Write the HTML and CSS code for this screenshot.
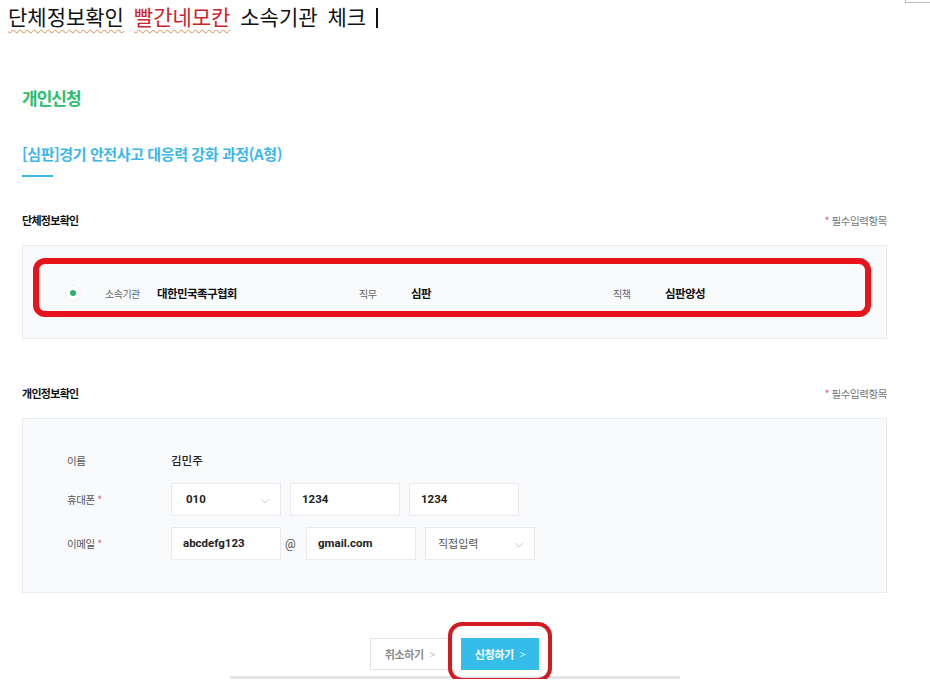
FILE: index.html
```html
<!DOCTYPE html>
<html lang="ko">
<head>
  <meta charset="utf-8">
  <title>개인신청</title>
  <link rel="stylesheet" href="styles.css">
</head>
<body>
  <div class="memo">
    <span class="spell">단체정보확인</span> <span class="spell red">빨간네모칸</span> 소속기관 체크 <span class="caret"></span>
  </div>
  <div class="corner"></div>

  <main class="page">
    <h1 class="page-title">개인신청</h1>
    <h2 class="course-title">[심판]경기 안전사고 대응력 강화 과정(A형)</h2>
    <div class="title-bar"></div>

    <div class="section-head">
      <h3>단체정보확인</h3>
      <span class="req"><em>*</em> 필수입력항목</span>
    </div>
    <div class="box group-box">
      <div class="group-row">
        <span class="radio"></span>
        <div class="field"><span class="lbl">소속기관</span><span class="val">대한민국족구협회</span></div>
        <div class="field"><span class="lbl">직무</span><span class="val">심판</span></div>
        <div class="field"><span class="lbl">직책</span><span class="val">심판양성</span></div>
      </div>
      <div class="mark mark-group"></div>
    </div>

    <div class="section-head second">
      <h3>개인정보확인</h3>
      <span class="req"><em>*</em> 필수입력항목</span>
    </div>
    <div class="box person-box">
      <div class="form-row name-row">
        <span class="form-lbl">이름</span>
        <span class="name-val">김민주</span>
      </div>
      <div class="form-row">
        <span class="form-lbl">휴대폰 <em>*</em></span>
        <div class="inputs">
          <div class="input select">010
            <svg class="chev" width="10" height="6" viewBox="0 0 10 6"><path d="M1 1l4 4 4-4" fill="none" stroke="#c9ccd1" stroke-width="1"/></svg>
          </div>
          <div class="input">1234</div>
          <div class="input">1234</div>
        </div>
      </div>
      <div class="form-row">
        <span class="form-lbl">이메일 <em>*</em></span>
        <div class="inputs">
          <div class="input">abcdefg123</div>
          <span class="at">@</span>
          <div class="input">gmail.com</div>
          <div class="input select plain">직접입력
            <svg class="chev" width="10" height="6" viewBox="0 0 10 6"><path d="M1 1l4 4 4-4" fill="none" stroke="#c9ccd1" stroke-width="1"/></svg>
          </div>
        </div>
      </div>
    </div>

    <div class="actions">
      <button class="btn btn-cancel">취소하기 <span class="arr">&gt;</span></button>
      <div class="submit-wrap">
        <button class="btn btn-submit">신청하기 <span class="arr">&gt;</span></button>
        <div class="mark mark-submit"></div>
      </div>
    </div>
    <div class="footer-line"></div>
  </main>
</body>
</html>
```

FILE: styles.css
```css
body {
  margin: 0;
  background: #fff;
  font-family: "Noto Sans CJK KR", "Noto Sans", sans-serif;
  color: #222;
  overflow: hidden;
}

.memo {
  height: 34px;
  padding-left: 8px;
  font-size: 21px;
  line-height: 32px;
  color: #111;
  word-spacing: 4px;
  white-space: nowrap;
}

.spell {
  text-decoration: underline wavy #e08a4a;
  text-decoration-thickness: 1px;
  text-underline-offset: 4px;
}

.red {
  color: #d0222a;
}

.caret {
  display: inline-block;
  width: 2px;
  height: 20px;
  background: #111;
  vertical-align: -3px;
}

.corner {
  position: absolute;
  top: 0;
  right: 0;
  width: 24px;
  height: 2px;
  border-left: 1px solid #bbb;
  border-bottom: 1px solid #bbb;
}

.page {
  width: 865px;
  margin-left: 22px;
}

.page-title {
  margin: 54px 0 0;
  font-size: 17px;
  line-height: 20px;
  font-weight: 700;
  letter-spacing: -1px;
  color: #2cbd6c;
}

.course-title {
  margin: 36px 0 0;
  font-size: 15px;
  line-height: 20px;
  font-weight: 700;
  letter-spacing: -0.4px;
  color: #3bb7e8;
}

.title-bar {
  width: 31px;
  height: 2px;
  margin-top: 11px;
  background: #3bb7e8;
}

.section-head {
  display: flex;
  justify-content: space-between;
  align-items: center;
  height: 16px;
  margin-top: 35px;
}

.section-head.second {
  margin-top: 46px;
}

.section-head h3 {
  margin: 0;
  font-size: 11px;
  font-weight: 700;
  letter-spacing: -0.7px;
  color: #111;
}

.req {
  font-size: 10.5px;
  color: #777;
  letter-spacing: -0.4px;
}

.req em,
.form-lbl em {
  font-style: normal;
  color: #e4587a;
}

.box {
  position: relative;
  margin-top: 17px;
  background: #f9fafc;
  border: 1px solid #e8ebef;
}

.group-box {
  padding: 37px 0 35px 43px;
}

.group-row {
  display: flex;
  align-items: center;
  height: 20px;
}

.radio {
  position: relative;
  width: 14px;
  height: 14px;
  border-radius: 50%;
  background: #fff;
  box-shadow: 0 0 0 1px #eef1f3;
  margin-right: 25px;
}

.radio::after {
  content: "";
  position: absolute;
  left: 4px;
  top: 4px;
  width: 6px;
  height: 6px;
  border-radius: 50%;
  background: #27b46a;
}

.field {
  display: flex;
  align-items: center;
  width: 254px;
}

.lbl {
  width: 52px;
  font-size: 10px;
  color: #666;
  letter-spacing: -0.5px;
}

.val {
  font-size: 11.5px;
  font-weight: 700;
  color: #111;
  letter-spacing: -0.6px;
}

.mark {
  position: absolute;
  box-sizing: border-box;
  border: 6px solid #e8141b;
  border-radius: 12px;
  pointer-events: none;
}

.mark-group {
  left: 10px;
  top: 12px;
  width: 838px;
  height: 59px;
}

.person-box {
  padding: 31px 0 32px 44px;
}

.form-row {
  display: flex;
  align-items: center;
  margin-top: 11px;
}

.name-row {
  height: 20px;
  margin-top: 0;
}

.name-row + .form-row {
  margin-top: 13px;
}

.form-lbl {
  width: 104px;
  font-size: 10.5px;
  color: #555;
  letter-spacing: -0.4px;
}

.name-val {
  font-size: 11.5px;
  font-weight: 500;
  color: #222;
}

.inputs {
  display: flex;
  align-items: center;
  gap: 9px;
}

.input {
  position: relative;
  box-sizing: border-box;
  width: 110px;
  height: 33px;
  padding-left: 11px;
  background: #fff;
  border: 1px solid #e8eaed;
  font-family: Roboto, "Noto Sans CJK KR", sans-serif;
  font-size: 11.5px;
  font-weight: 700;
  line-height: 31px;
  color: #222;
}

.input.select {
  padding-left: 14px;
}

.input.plain {
  padding-left: 12px;
  font-family: "Noto Sans CJK KR", sans-serif;
  font-size: 11px;
  font-weight: 400;
  color: #555;
}

.chev {
  position: absolute;
  right: 10px;
  top: 14px;
}

.at {
  width: 11px;
  margin: 0 1px 0 -5px;
  font-family: Roboto, sans-serif;
  font-size: 12px;
  color: #555;
}

.actions {
  display: flex;
  justify-content: center;
  gap: 11px;
  margin-top: 45px;
}

.btn {
  box-sizing: border-box;
  height: 32px;
  border: 1px solid #e3e5e8;
  font-family: "Noto Sans CJK KR", sans-serif;
  font-size: 11px;
  font-weight: 700;
  letter-spacing: -0.4px;
  cursor: pointer;
}

.btn-cancel {
  width: 80px;
  background: #fff;
  color: #8a8d92;
}

.btn-submit {
  width: 78px;
  background: #35bde9;
  border-color: #35bde9;
  color: #fff;
}

.arr {
  margin-left: 3px;
  font-weight: 400;
  color: #c4c7cc;
}

.btn-submit .arr {
  color: #bfeafa;
}

.submit-wrap {
  position: relative;
}

.mark-submit {
  left: -13px;
  top: -16px;
  width: 104px;
  height: 60px;
  border-width: 4px;
  border-color: #d21a22;
  border-radius: 14px;
}

.footer-line {
  width: 450px;
  height: 3px;
  margin: 6px auto 0;
  background: #e4e6e9;
}
```
